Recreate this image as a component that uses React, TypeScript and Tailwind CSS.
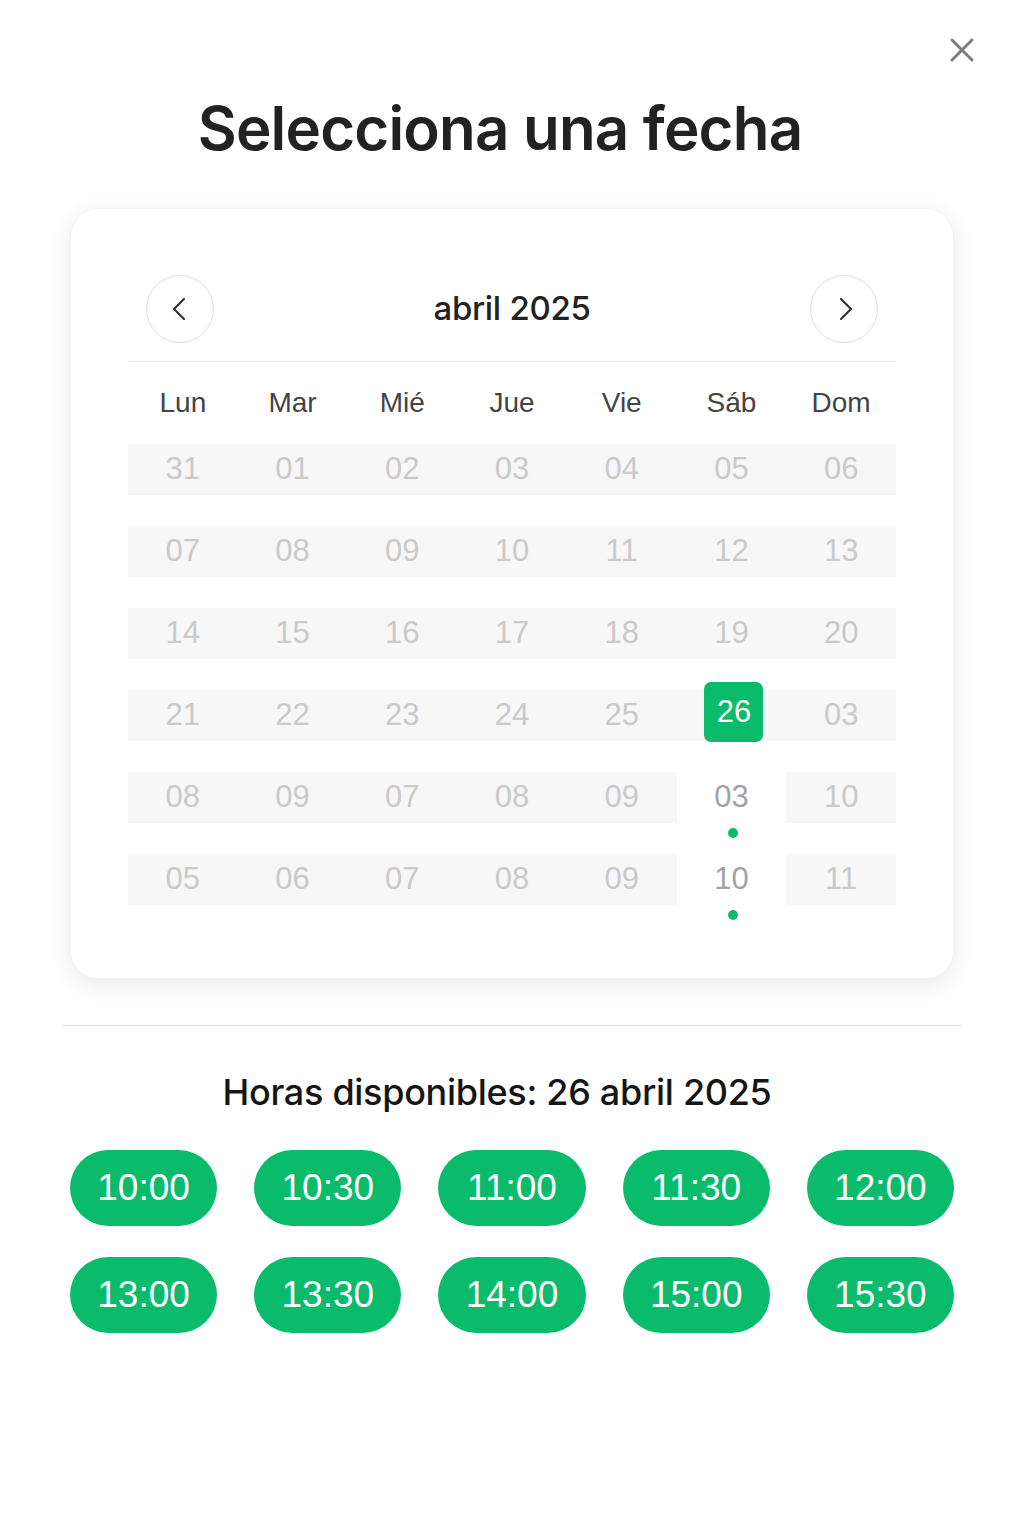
import React, { useState } from 'react';
import { ChevronLeft, ChevronRight, X } from 'lucide-react';

type Day = { label: string; plain?: boolean; dot?: boolean };

const weekdays = ['Lun', 'Mar', 'Mié', 'Jue', 'Vie', 'Sáb', 'Dom'];

const weeks: Day[][] = [
    ['31', '01', '02', '03', '04', '05', '06'].map((label) => ({ label })),
    ['07', '08', '09', '10', '11', '12', '13'].map((label) => ({ label })),
    ['14', '15', '16', '17', '18', '19', '20'].map((label) => ({ label })),
    ['21', '22', '23', '24', '25', '26', '03'].map((label) => ({ label })),
    [
        { label: '08' }, { label: '09' }, { label: '07' }, { label: '08' }, { label: '09' },
        { label: '03', plain: true, dot: true }, { label: '10' },
    ],
    [
        { label: '05' }, { label: '06' }, { label: '07' }, { label: '08' }, { label: '09' },
        { label: '10', plain: true, dot: true }, { label: '11' },
    ],
];

const times = ['10:00', '10:30', '11:00', '11:30', '12:00', '13:00', '13:30', '14:00', '15:00', '15:30'];

const App: React.FC = () => {
    const [selected] = useState('3-5');

    return (
        <div className="relative w-[1024px] min-h-[1536px] bg-white font-['Liberation_Sans',Arial,sans-serif]">
            {/* close button sits over the top-right corner */}
            <button className="absolute right-[42px] top-[30px] text-[#7d7d7d]">
                <X size={40} strokeWidth={1.8} />
            </button>

            <h1 className="pt-[92px] pr-[24px] text-center font-['Inter',sans-serif] text-[60px] leading-[72px] font-semibold tracking-[-0.8px] text-[#222]">
                Selecciona una fecha
            </h1>

            <div className="mx-[70px] mt-[44px] rounded-[28px] bg-white px-[57px] pt-[66px] pb-[73px] shadow-[0_6px_24px_rgba(0,0,0,0.09)] border border-[#f2f2f2]">
                <div className="flex items-center justify-between px-[18px] pb-[18px] border-b border-[#e3e3e3]">
                    <button className="flex h-[68px] w-[68px] items-center justify-center rounded-full border border-[#dcdcdc] text-[#333]">
                        <ChevronLeft size={40} strokeWidth={1.3} className="-ml-[3px]" />
                    </button>
                    <span className="font-['Inter',sans-serif] text-[33px] font-medium tracking-[-0.3px] text-[#222]">abril 2025</span>
                    <button className="flex h-[68px] w-[68px] items-center justify-center rounded-full border border-[#dcdcdc] text-[#333]">
                        <ChevronRight size={40} strokeWidth={1.3} className="ml-[3px]" />
                    </button>
                </div>

                <div className="grid grid-cols-7 h-[82px] items-center">
                    {weekdays.map((d) => (
                        <span key={d} className="text-center text-[28px] text-[#444]">{d}</span>
                    ))}
                </div>

                <div className="flex flex-col gap-[31px]">
                    {weeks.map((week, wi) => (
                        <div key={wi} className="grid grid-cols-7 h-[51px]">
                            {week.map((day, di) => {
                                const isSelected = `${wi}-${di}` === selected;
                                return (
                                    <div
                                        key={di}
                                        className={`relative flex items-center justify-center ${day.plain ? 'bg-white' : 'bg-[#f7f7f7]'}`}
                                    >
                                        {isSelected ? (
                                            <span className="absolute left-1/2 top-[-8px] ml-[-27px] flex h-[60px] w-[59px] items-center justify-center rounded-[7px] bg-[#0abb6c] text-[31px] text-white">
                                                {day.label}
                                            </span>
                                        ) : (
                                            <span className={`text-[31px] ${day.plain ? 'text-[#a3a3a3]' : 'text-[#cacaca]'}`}>
                                                {day.label}
                                            </span>
                                        )}
                                        {day.dot && (
                                            <span className="absolute left-1/2 bottom-[-15px] ml-[-3px] h-[10px] w-[10px] rounded-full bg-[#0abb6c]" />
                                        )}
                                    </div>
                                );
                            })}
                        </div>
                    ))}
                </div>
            </div>

            <div className="mx-[62px] mt-[46px] border-t border-[#dddddd]" />

            <h2 className="mt-[44px] pr-[30px] text-center font-['Inter',sans-serif] text-[36px] leading-[44px] font-medium tracking-[-0.3px] text-[#151515]">
                Horas disponibles: 26 abril 2025
            </h2>

            <div className="mx-[70px] mt-[36px] grid grid-cols-5 gap-x-[37px] gap-y-[31px]">
                {times.map((t) => (
                    <button
                        key={t}
                        className="flex h-[76px] items-center justify-center rounded-full bg-[#0abb6c] text-[37px] text-white"
                    >
                        {t}
                    </button>
                ))}
            </div>
        </div>
    );
};

export default App;
